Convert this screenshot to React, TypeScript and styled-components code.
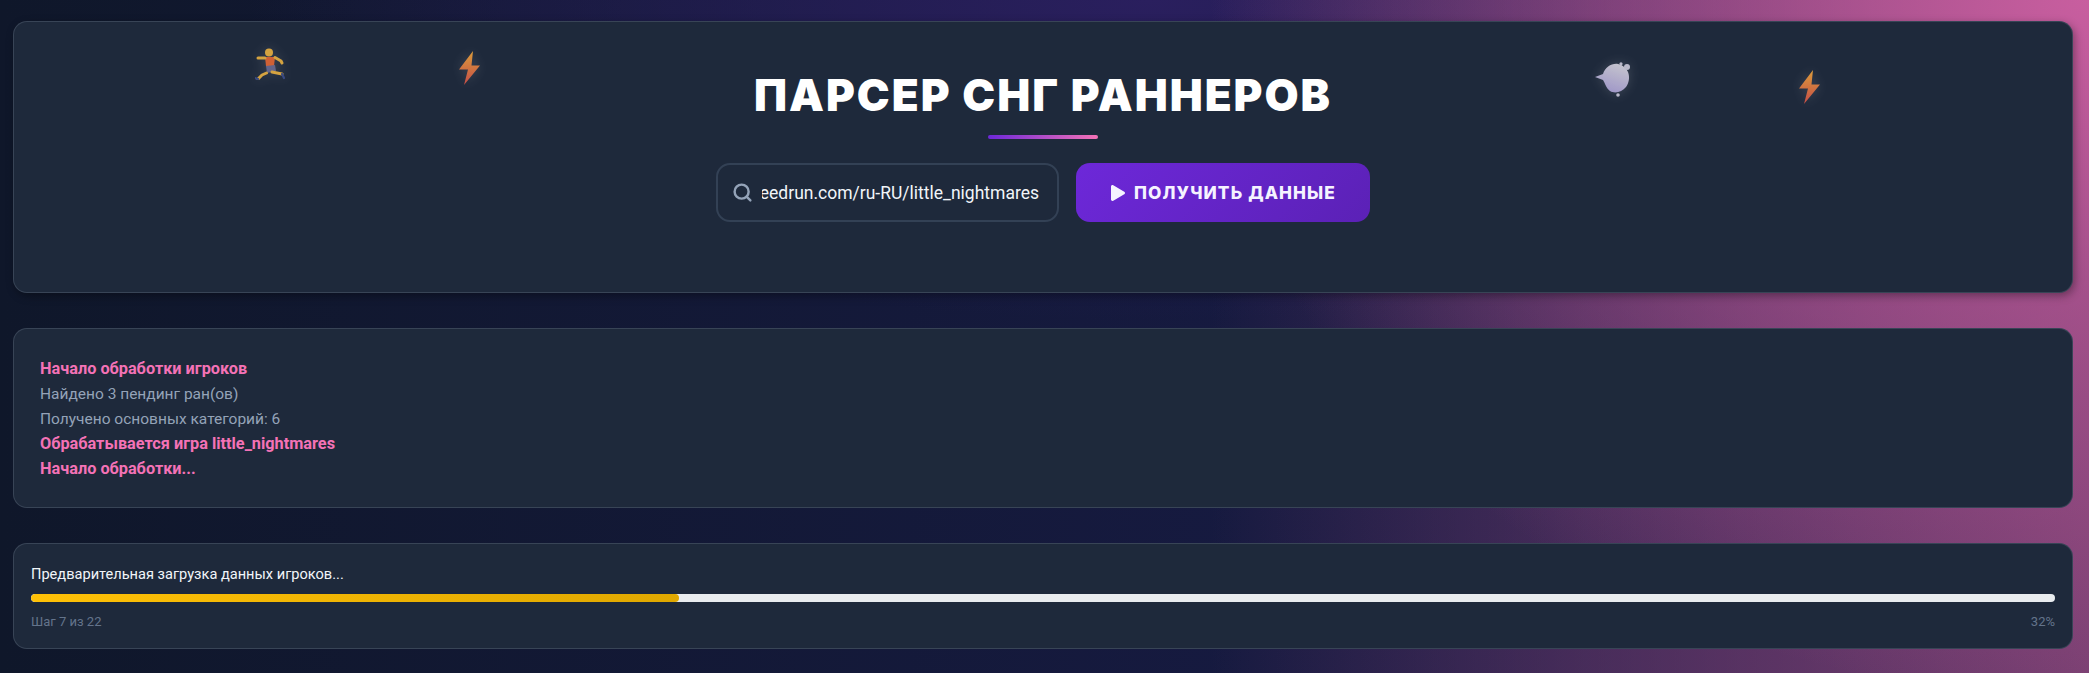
import React from 'react'
import styled, { createGlobalStyle } from 'styled-components'
import { FaPlay } from 'react-icons/fa'
import { FiSearch } from 'react-icons/fi'

const GlobalStyle = createGlobalStyle`
  * { box-sizing: border-box; }
  html, body { margin: 0; height: 100%; }
  body {
    min-height: 673px;
    overflow: hidden;
    font-family: Roboto, "Noto Sans", sans-serif;
    background-color: #0f172a;
    background-image:
      radial-gradient(ellipse 880px 700px at 100% 0%, #c85e9f 0%, rgba(204, 96, 162, 0.5) 42%, rgba(204, 96, 162, 0) 100%),
      linear-gradient(90deg, rgba(122, 64, 114, 0) 58%, rgba(122, 64, 114, 0.48) 76%, #7a4072 100%),
      radial-gradient(ellipse 900px 320px at 55% 0%, #2a1f5e 0%, rgba(30, 27, 75, 0) 100%),
      linear-gradient(90deg, #0f172a 0%, #161a40 60%, #1e1b4b 100%);
  }
`

const Page = styled.div`
  padding: 21px 16px 0 13px;
  display: flex;
  flex-direction: column;
  gap: 35px;
`

const Panel = styled.section`
  background: #1e293b;
  border: 1px solid rgba(148, 163, 184, 0.22);
  border-radius: 14px;
`

const HeaderPanel = styled(Panel)`
  position: relative;
  height: 272px;
  padding-top: 43px;
  display: flex;
  flex-direction: column;
  align-items: center;
  box-shadow: 2px 3px 8px rgba(0, 0, 0, 0.35);
`

const Title = styled.h1`
  margin: 0;
  color: #fff;
  font-family: Inter, "Noto Sans", sans-serif;
  font-size: 44px;
  line-height: 60px;
  font-weight: 900;
  letter-spacing: 2px;
  white-space: nowrap;
`

const Underline = styled.div`
  width: 110px;
  height: 4px;
  margin-top: 10px;
  border-radius: 2px;
  background: linear-gradient(90deg, #6d28d9, #f472b6);
`

const SearchRow = styled.div`
  display: flex;
  gap: 17px;
  margin-top: 24px;
`

const SearchBox = styled.div`
  width: 343px;
  height: 59px;
  display: flex;
  align-items: center;
  padding: 0 18px 0 14px;
  gap: 9px;
  border: 2px solid #334155;
  border-radius: 14px;
  color: #94a3b8;
  font-size: 21px;
  svg { stroke-width: 2.8; flex-shrink: 0; }
`

const UrlClip = styled.div`
  flex: 1;
  min-width: 0;
  display: flex;
  justify-content: flex-end;
  overflow: hidden;
  white-space: nowrap;
  color: #f1f5f9;
  font-size: 17.5px;
`

const RunButton = styled.button`
  width: 294px;
  height: 59px;
  display: flex;
  align-items: center;
  justify-content: center;
  gap: 8px;
  border: none;
  border-radius: 14px;
  background: linear-gradient(135deg, #6d28d9, #5b21b6);
  color: #f5f3ff;
  font-family: Inter, "Noto Sans", sans-serif;
  font-size: 17.3px;
  font-weight: 800;
  letter-spacing: 1.1px;
  svg { font-size: 16px; }
`

const Floating = styled.svg<{ $left: number; $top: number }>`
  position: absolute;
  left: ${(p) => p.$left}px;
  top: ${(p) => p.$top}px;
  opacity: 0.85;
  filter: blur(0.5px) drop-shadow(0 0 6px rgba(255, 255, 255, 0.18));
`

const LogPanel = styled(Panel)`
  height: 180px;
  padding: 27px 26px;
`

const LogLine = styled.div<{ $accent?: boolean }>`
  height: 25px;
  line-height: 26px;
  font-size: ${(p) => (p.$accent ? 16.3 : 15.5)}px;
  font-weight: ${(p) => (p.$accent ? 700 : 400)};
  color: ${(p) => (p.$accent ? '#f472b6' : '#94a3b8')};
`

const ProgressPanel = styled(Panel)`
  height: 106px;
  padding: 17px 17px;
`

const ProgressLabel = styled.div`
  height: 28px;
  line-height: 26px;
  color: #f1f5f9;
  font-size: 14.6px;
`

const Track = styled.div`
  height: 8px;
  margin-top: 5px;
  border-radius: 4px;
  background: #e9ecef;
  overflow: hidden;
`

const Fill = styled.div`
  height: 100%;
  border-radius: 4px;
  background: linear-gradient(90deg, #ffc107, #e0a800);
`

const ProgressMeta = styled.div`
  display: flex;
  justify-content: space-between;
  margin-top: 12px;
  color: #64748b;
  font-size: 13px;
`

const Runner = () => (
  <Floating $left={241} $top={26} width="30" height="32" viewBox="0 0 30 32">
    <circle cx="14" cy="4.5" r="4" fill="#f5b942" />
    <path d="M10 9l10 0-1 9-8 0z" fill="#ee6a34" />
    <path d="M10 10L3 10M20 9.5l6 3.5 1 2" stroke="#f5b942" strokeWidth="3" fill="none" strokeLinecap="round" strokeLinejoin="round" />
    <path d="M11 18l9-1 1 6-9 2z" fill="#6f6f98" />
    <path d="M11.5 25L7 27l-4 4M17 24l10 2" stroke="#f5b942" strokeWidth="3" fill="none" strokeLinecap="round" strokeLinejoin="round" />
    <path d="M3 31L0 30M27 26l2 4" stroke="#3d4f8f" strokeWidth="2.2" strokeLinecap="round" />
  </Floating>
)

const Bolt = ({ left, top, id }: { left: number; top: number; id: string }) => (
  <Floating $left={left} $top={top} width="22" height="34" viewBox="0 0 22 34">
    <defs>
      <linearGradient id={id} x1="0.5" y1="0" x2="0.5" y2="1">
        <stop offset="0" stopColor="#fdb03b" />
        <stop offset="1" stopColor="#e2544a" />
      </linearGradient>
    </defs>
    <path d="M14 0L0 18.5h9L5 34 21 14.5h-8.5z" fill={`url(#${id})`} />
  </Floating>
)

const Dash = () => (
  <Floating $left={1581} $top={40} width="38" height="36" viewBox="0 0 38 36">
    <defs>
      <linearGradient id="dashFill" x1="0.7" y1="0" x2="0.3" y2="1">
        <stop offset="0" stopColor="#e2dfe8" />
        <stop offset="1" stopColor="#b4a8e0" />
      </linearGradient>
    </defs>
    <path d="M0 15L8 12C10 5 17 1 23 2 28 3 31 6 33 10 35 15 34 21 31 25 27 30 20 32 15 29 11 26 10 21 8 18z" fill="url(#dashFill)" />
    <circle cx="32" cy="5" r="3" fill="#d6d3e4" />
    <circle cx="26" cy="1.8" r="1.6" fill="#d6d3e4" />
    <circle cx="23" cy="33" r="1.8" fill="#d6d3e4" />
  </Floating>
)

const App = () => {
  const percent = 32

  return (
    <>
      <GlobalStyle />
      <Page>
        <HeaderPanel>
          <Runner />
          <Bolt left={445} top={29} id="boltA" />
          <Dash />
          <Bolt left={1785} top={48} id="boltB" />
          <Title>ПАРСЕР СНГ РАННЕРОВ</Title>
          <Underline />
          <SearchRow>
            <SearchBox>
              <FiSearch />
              <UrlClip>https://www.speedrun.com/ru-RU/little_nightmares</UrlClip>
            </SearchBox>
            <RunButton>
              <FaPlay />
              ПОЛУЧИТЬ ДАННЫЕ
            </RunButton>
          </SearchRow>
        </HeaderPanel>

        <LogPanel>
          <LogLine $accent>Начало обработки игроков</LogLine>
          <LogLine>Найдено 3 пендинг ран(ов)</LogLine>
          <LogLine>Получено основных категорий: 6</LogLine>
          <LogLine $accent>Обрабатывается игра little_nightmares</LogLine>
          <LogLine $accent>Начало обработки...</LogLine>
        </LogPanel>

        <ProgressPanel>
          <ProgressLabel>Предварительная загрузка данных игроков...</ProgressLabel>
          <Track>
            <Fill style={{ width: `${percent}%` }} />
          </Track>
          <ProgressMeta>
            <span>Шаг 7 из 22</span>
            <span>{percent}%</span>
          </ProgressMeta>
        </ProgressPanel>
      </Page>
    </>
  )
}

export default App
